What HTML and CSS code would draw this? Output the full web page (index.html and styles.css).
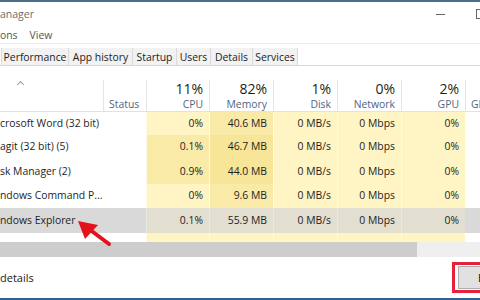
FILE: index.html
```html
<!DOCTYPE html>
<html lang="en">
<head>
    <meta charset="UTF-8">
    <meta name="viewport" content="width=device-width, initial-scale=1.0">
    <title>Task Manager</title>
    <link rel="stylesheet" href="styles.css">
</head>
<body>

<div class="window">
  <div class="titlebar">
    <span class="title">anager</span>
    <div class="controls">
      <span class="min"></span>
      <span class="max"></span>
    </div>
  </div>

  <div class="menubar">
    <span>ons</span>
    <span>View</span>
  </div>

  <div class="tabs">
    <span class="tab active"></span>
    <span class="tab t-perf">Performance</span>
    <span class="tab t-app">App history</span>
    <span class="tab t-start">Startup</span>
    <span class="tab t-users">Users</span>
    <span class="tab t-details">Details</span>
    <span class="tab t-services">Services</span>
  </div>

  <div class="grid">
    <div class="row head">
      <div class="hcell name-h"><span class="sort"></span></div>
      <div class="hcell"><span class="pct"></span><span class="label left">Status</span></div>
      <div class="hcell"><span class="pct">11%</span><span class="label">CPU</span></div>
      <div class="hcell"><span class="pct">82%</span><span class="label">Memory</span></div>
      <div class="hcell"><span class="pct">1%</span><span class="label">Disk</span></div>
      <div class="hcell"><span class="pct">0%</span><span class="label">Network</span></div>
      <div class="hcell"><span class="pct">2%</span><span class="label">GPU</span></div>
      <div class="hcell last"><span class="pct"></span><span class="label left">GP</span></div>
    </div>

    <div class="row r23">
      <div class="cell name">crosoft Word (32 bit)</div>
      <div class="cell"></div>
      <div class="cell y1">0%</div>
      <div class="cell y2">40.6 MB</div>
      <div class="cell y1">0 MB/s</div>
      <div class="cell y1">0 Mbps</div>
      <div class="cell y1">0%</div>
      <div class="cell"></div>
    </div>
    <div class="row r24">
      <div class="cell name">agit (32 bit) (5)</div>
      <div class="cell"></div>
      <div class="cell y2">0.1%</div>
      <div class="cell y3">46.7 MB</div>
      <div class="cell y1">0 MB/s</div>
      <div class="cell y1">0 Mbps</div>
      <div class="cell y1">0%</div>
      <div class="cell"></div>
    </div>
    <div class="row r25">
      <div class="cell name">sk Manager (2)</div>
      <div class="cell"></div>
      <div class="cell y2">0.9%</div>
      <div class="cell y3">44.0 MB</div>
      <div class="cell y1">0 MB/s</div>
      <div class="cell y1">0 Mbps</div>
      <div class="cell y1">0%</div>
      <div class="cell"></div>
    </div>
    <div class="row r24">
      <div class="cell name">ndows Command P...</div>
      <div class="cell"></div>
      <div class="cell y1">0%</div>
      <div class="cell y2">9.6 MB</div>
      <div class="cell y1">0 MB/s</div>
      <div class="cell y1">0 Mbps</div>
      <div class="cell y1">0%</div>
      <div class="cell"></div>
    </div>
    <div class="row r25 selected">
      <div class="cell name">ndows Explorer</div>
      <div class="cell"></div>
      <div class="cell y1">0.1%</div>
      <div class="cell y2">55.9 MB</div>
      <div class="cell y1">0 MB/s</div>
      <div class="cell y1">0 Mbps</div>
      <div class="cell y1">0%</div>
      <div class="cell"></div>
    </div>
    <div class="row partial">
      <div class="cell name"></div>
      <div class="cell"></div>
      <div class="cell y1"></div>
      <div class="cell y1"></div>
      <div class="cell y1"></div>
      <div class="cell y1"></div>
      <div class="cell y1"></div>
      <div class="cell"></div>
    </div>
  </div>

  <div class="hscroll"><div class="thumb"></div></div>

  <div class="footer">
    <span class="fewer">details</span>
    <div class="end-wrap"><button class="end-btn">E</button></div>
  </div>

  <svg class="pointer" width="50" height="36" viewBox="0 0 50 36">
    <line x1="14" y1="10" x2="38" y2="28" stroke="#e3121c" stroke-width="4" stroke-linecap="round"/>
    <polygon points="7,5 27,9 14,23" fill="#e3121c"/>
  </svg>
</div>

</body>
</html>
```

FILE: styles.css
```css
body {
    margin: 0;
    width: 480px;
    height: 300px;
    overflow: hidden;
    background-color: #fff;
    font-family: "Segoe UI", "Open Sans", sans-serif;
    font-size: 10.4px;
    color: #1e1e1e;
}

.window {
    position: relative;
    height: 300px;
    box-sizing: border-box;
    border-top: 2px solid #4b6d8c;
    border-bottom: 2px solid #2f6396;
    display: flex;
    flex-direction: column;
}

.titlebar {
    height: 24px;
    display: flex;
    align-items: center;
    justify-content: space-between;
}

.title {
    font-size: 10.5px;
    color: #6b6b6b;
}

.controls {
    display: flex;
    align-items: center;
    gap: 31px;
    margin-right: -6px;
}

.min {
    width: 9px;
    height: 1px;
    background-color: #666;
}

.max {
    width: 8px;
    height: 8px;
    border: 1px solid #666;
}

.menubar {
    height: 17px;
    display: flex;
    align-items: center;
    gap: 12px;
    color: #555;
}

.tabs {
    height: 17px;
    padding-top: 4px;
    border-top: 1px solid #ececec;
    border-bottom: 1px solid #d9d9d9;
    display: flex;
}

.tab {
    background-color: #f2f2f2;
    border-right: 1px solid #d9d9d9;
    display: flex;
    align-items: center;
    justify-content: center;
    white-space: nowrap;
    color: #222;
}

.tab.active { width: 1px; background-color: #fff; }
.t-perf { width: 66px; }
.t-app { width: 63px; }
.t-start { width: 43px; }
.t-users { width: 33px; }
.t-details { width: 41px; }
.t-services { width: 44px; }

.grid {
    display: flex;
    flex-direction: column;
}

.row {
    display: grid;
    grid-template-columns: 103px 43px 63px 64px 64px 64px 64px 15px;
}

.head {
    height: 46px;
    border-bottom: 1px solid #e2e2e2;
    box-sizing: border-box;
}

.hcell {
    margin-top: 14px;
    border-left: 1px solid #e5e5e5;
    display: flex;
    flex-direction: column;
    align-items: flex-end;
    padding-right: 6px;
    white-space: nowrap;
}

.hcell.last {
    overflow: hidden;
}

.hcell.name-h {
    border-left: none;
    position: relative;
}

.sort {
    position: absolute;
    left: 18px;
    top: 2px;
    width: 4px;
    height: 4px;
    border-top: 1px solid #999;
    border-left: 1px solid #999;
    transform: rotate(45deg);
}

.pct {
    height: 17px;
    font-size: 14px;
    line-height: 17px;
    color: #1e1e1e;
}

.label {
    margin-top: 1px;
    line-height: 12px;
    color: #4d6582;
}

.label.left {
    align-self: flex-start;
    padding-left: 5px;
}

.r23 { height: 23px; }
.r24 { height: 24px; }
.r25 { height: 25px; }
.partial { height: 9px; }

.cell {
    display: flex;
    align-items: center;
    justify-content: flex-end;
    padding-right: 6px;
    padding-bottom: 2px;
    white-space: nowrap;
    overflow: hidden;
}

.cell.name {
    justify-content: flex-start;
}

.y1 { background-color: #fff4c4; }
.y2 { background-color: #f9eaa8; }
.y3 { background-color: #f7e598; }

.y1, .y2, .y3 {
    border-left: 1px solid #fffae4;
}

.selected .cell { background-color: #d9d9d9; }
.selected .y1, .selected .y2 { background-color: #e2ded0; border-left-color: #ebe8de; }

.hscroll {
    height: 15px;
    background-color: #efefef;
}

.thumb {
    width: 417px;
    height: 15px;
    background-color: #cdcdcd;
}

.footer {
    flex: 1;
    display: flex;
    align-items: center;
}

.fewer {
    color: #222;
    font-size: 11px;
}

.end-wrap {
    margin-left: auto;
    margin-right: -72px;
    width: 100px;
    height: 31px;
    box-sizing: border-box;
    border: 3px solid #e5213b;
    padding: 1px 3px;
}

.end-btn {
    width: 100%;
    height: 100%;
    background-color: #e1e1e1;
    border: 1px solid #adadad;
    font-family: "Segoe UI", "Open Sans", sans-serif;
    font-size: 11px;
    color: #111;
    text-align: left;
    padding: 0 0 0 19px;
}

.pointer {
    position: absolute;
    left: 71px;
    top: 214px;
}
```
